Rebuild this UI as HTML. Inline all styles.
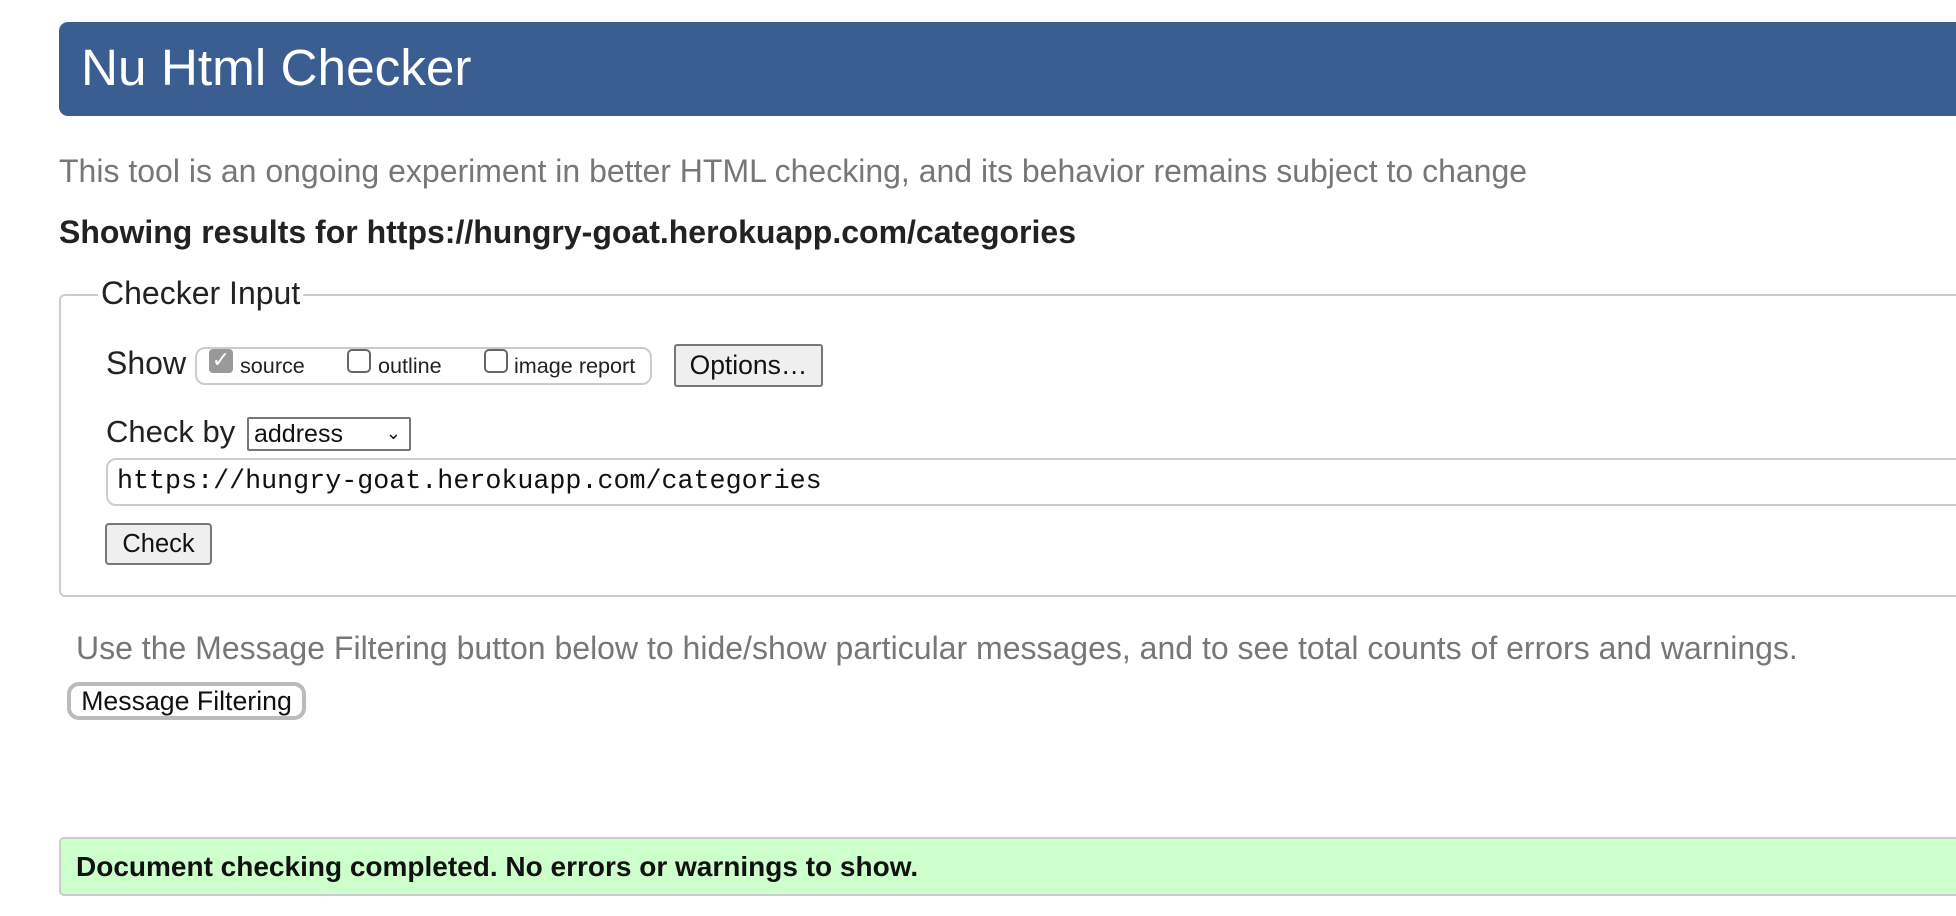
<!DOCTYPE html>
<html><head><meta charset="utf-8"><style>
*{box-sizing:border-box;margin:0;padding:0}
body{width:1956px;height:916px;overflow:hidden;background:#fff;font-family:"Liberation Sans",Arial,sans-serif;position:relative}
.a{position:absolute;white-space:nowrap}
</style></head><body>
<div class="a" style="left:59px;top:22px;width:1920px;height:94px;background:#3a5e91;border-radius:9px"></div>
<div class="a" style="left:81px;top:38px;font-size:51.3px;line-height:60px;color:#fff">Nu Html Checker</div>
<div class="a" style="left:59px;top:153px;font-size:32px;line-height:36px;color:#777">This tool is an ongoing experiment in better HTML checking, and its behavior remains subject to change</div>
<div class="a" style="left:59px;top:214px;font-size:32px;line-height:36px;color:#222;font-weight:bold">Showing results for https://hungry-goat.herokuapp.com/categories</div>

<div class="a" style="left:59px;top:294px;width:1920px;height:303px;border:2px solid #ccc;border-radius:6px"></div>
<div class="a" style="left:98px;top:274px;padding:0 3px;background:#fff;font-size:32px;line-height:38px;color:#222">Checker Input</div>

<div class="a" style="left:106px;top:344px;font-size:32px;line-height:38px;color:#222">Show</div>
<div class="a" style="left:195px;top:347px;width:457px;height:38px;border:2px solid #ccc;border-radius:10px"></div>
<div class="a" style="left:209px;top:349px;width:24px;height:24px;background:#999;border-radius:4px;color:#fff;font-size:22px;line-height:22px;text-align:center">✓</div>
<div class="a" style="left:240px;top:354px;font-size:21.6px;line-height:24px;color:#222">source</div>
<div class="a" style="left:347px;top:349px;width:24px;height:24px;border:2px solid #666;border-radius:5px"></div>
<div class="a" style="left:378px;top:354px;font-size:21.6px;line-height:24px;color:#222">outline</div>
<div class="a" style="left:484px;top:349px;width:24px;height:24px;border:2px solid #666;border-radius:5px"></div>
<div class="a" style="left:514px;top:354px;font-size:21.6px;line-height:24px;color:#222">image report</div>
<div class="a" style="left:674px;top:344px;width:149px;height:43px;border:2px solid #777;border-radius:3px;background:#efefef;font-size:26.5px;line-height:39px;text-align:center;color:#111">Options…</div>

<div class="a" style="left:106px;top:413px;font-size:31px;line-height:38px;color:#222">Check by</div>
<div class="a" style="left:247px;top:417px;width:164px;height:34px;border:2px solid #777;border-radius:2px;font-size:25px;line-height:30px;padding-left:5px;color:#111">address<span style="position:absolute;right:8px;top:-1px;font-size:18px">&#8964;</span></div>

<div class="a" style="left:106px;top:458px;width:1900px;height:48px;border:2px solid #ccc;border-radius:10px"></div>
<div class="a" style="left:117px;top:466px;font-family:'Liberation Mono',monospace;font-size:26.7px;line-height:32px;color:#111">https://hungry-goat.herokuapp.com/categories</div>

<div class="a" style="left:105px;top:523px;width:107px;height:42px;border:2px solid #777;border-radius:4px;background:#efefef;font-size:25.5px;line-height:38px;text-align:center;color:#111">Check</div>

<div class="a" style="left:76px;top:630px;font-size:32px;line-height:36px;color:#777">Use the Message Filtering button below to hide/show particular messages, and to see total counts of errors and warnings.</div>
<div class="a" style="left:67px;top:682px;width:239px;height:38px;border:4px solid #bbb;border-radius:12px;font-size:26.7px;line-height:30px;text-align:center;color:#111">Message Filtering</div>

<div class="a" style="left:59px;top:837px;width:1920px;height:59px;background:#ccffcc;border:2px solid #ccc;border-radius:5px"></div>
<div class="a" style="left:76px;top:851px;font-size:28px;line-height:32px;font-weight:bold;color:#111">Document checking completed. No errors or warnings to show.</div>
</body></html>
